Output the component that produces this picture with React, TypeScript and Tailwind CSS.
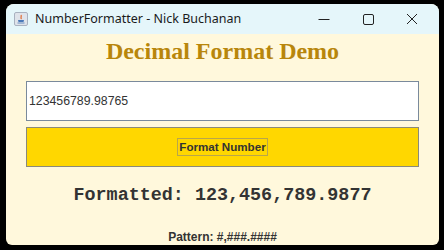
import React from "react";

export default function App() {
  return (
    <div className="w-[444px] h-[250px] bg-black pt-[4px] pl-[6px] pr-[5px] pb-[5px] overflow-hidden">
      <div className="w-[433px] h-[241px] rounded-t-[8px] rounded-b-[6px] overflow-hidden bg-[#fff8dc] flex flex-col">
        {/* Title bar */}
        <div className="h-[30px] bg-[#e5f6fa] flex items-center shrink-0">
          <div className="ml-[8px] w-[14px] h-[14px] rounded-[2px] bg-[#dfe3ea] border border-[#a9b2c0] flex items-center justify-center">
            <svg width="10" height="10" viewBox="0 0 10 10">
              <path d="M5 1 C6 2.5 4 3.5 5.5 5" stroke="#e0662a" strokeWidth="1.2" fill="none" />
              <path d="M2 6 H8 L7.5 8 H2.5 Z" fill="#4a78b8" />
              <path d="M1.5 9 H8.5" stroke="#4a78b8" strokeWidth="0.8" />
            </svg>
          </div>
          <span className="ml-[7px] text-[12.5px] text-[#1a1a1a] font-['Noto_Sans','Open_Sans',sans-serif] leading-none">
            NumberFormatter - Nick Buchanan
          </span>
          <div className="ml-auto flex items-center">
            <div className="w-[44px] flex justify-center">
              <svg width="12" height="12" viewBox="0 0 12 12">
                <path d="M0.5 6.5 H11.5" stroke="#222" strokeWidth="1" />
              </svg>
            </div>
            <div className="w-[44px] flex justify-center">
              <svg width="12" height="12" viewBox="0 0 12 12">
                <rect x="1.5" y="1.5" width="10" height="10" rx="1.5" stroke="#222" strokeWidth="1" fill="none" />
              </svg>
            </div>
            <div className="w-[44px] flex justify-center mr-[5px]">
              <svg width="12" height="12" viewBox="0 0 12 12">
                <path d="M1 1 L11 11 M11 1 L1 11" stroke="#222" strokeWidth="1" />
              </svg>
            </div>
          </div>
        </div>

        {/* Content */}
        <div className="flex flex-col items-center pt-[5px] px-[20px]">
          <div className="text-[24px] leading-[24px] font-bold text-[#b8860b] font-['Liberation_Serif',serif]">
            Decimal Format Demo
          </div>
          <div className="mt-[18px] w-[393px] h-[40px] bg-white border border-[#7a8a9c] flex items-center pl-[2px]">
            <span className="text-[12.3px] text-[#333] font-['Liberation_Sans',Arial,sans-serif]">123456789.98765</span>
          </div>
          <div className="mt-[6px] w-[393px] h-[40px] bg-[#ffd700] border border-[#8a8a7a] flex items-center justify-center">
            <span className="border border-[#b9a64a] px-[1px] h-[18px] flex items-center text-[11.6px] font-bold text-[#333] font-['Liberation_Sans',Arial,sans-serif]">
              Format Number
            </span>
          </div>
          <div className="mt-[21px] h-[16px] flex items-center whitespace-nowrap text-[18.4px] leading-[16px] font-bold text-[#333] font-['Liberation_Mono','Courier_New',monospace]">
            Formatted: 123,456,789.9877
          </div>
          <div className="mt-[27px] text-[12px] leading-[12px] font-bold text-[#333] font-['Liberation_Sans',Arial,sans-serif]">
            Pattern: #,###.####
          </div>
        </div>
      </div>
    </div>
  );
}
